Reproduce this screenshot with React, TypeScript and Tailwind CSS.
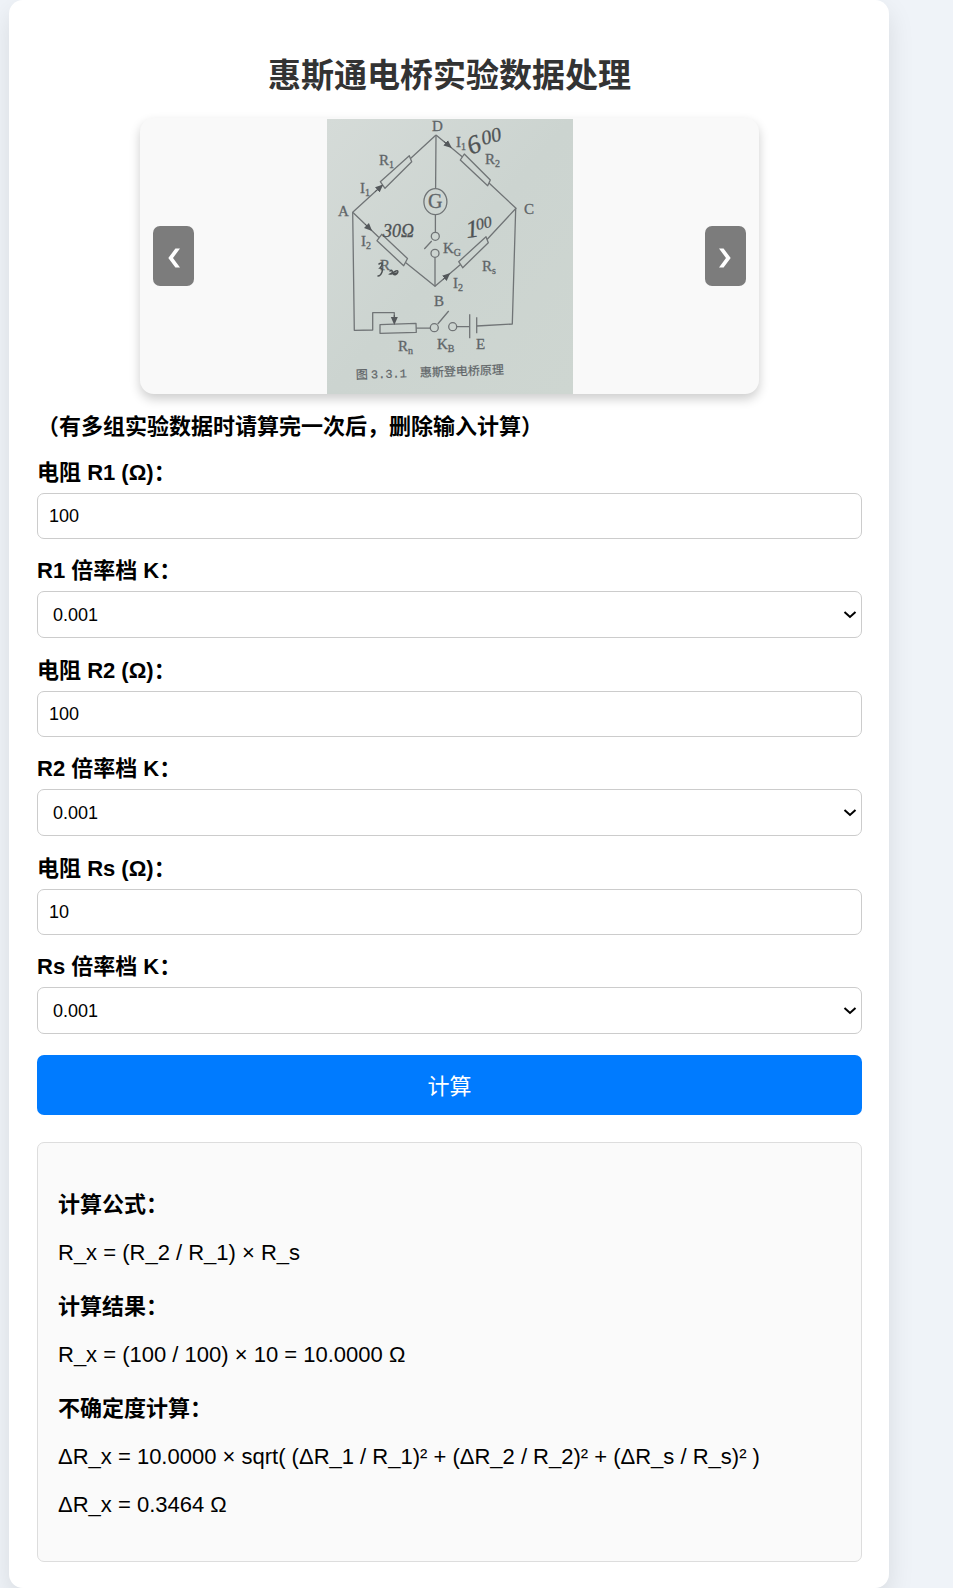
import { useState } from "react";
import type { FormEvent } from "react";

const SCALES = ["0.001", "0.01", "0.1", "1", "10", "100", "1000"];
const RELATIVE_ERROR = 0.02;

type Values = { r1: number; r2: number; rs: number };

function Label({ x, y, main, sub }: { x: number; y: number; main: string; sub?: string }) {
  return (
    <text x={x} y={y} fontSize="15">
      {main}
      {sub && (
        <tspan dy="3" fontSize="10">
          {sub}
        </tspan>
      )}
    </text>
  );
}

function BridgeDiagram() {
  return (
    <svg viewBox="0 0 246 275" className="block h-[275px] w-[246px]" role="img" aria-label="惠斯登电桥原理">
      <defs>
        <linearGradient id="paper" x1="0" y1="0" x2="1" y2="1">
          <stop offset="0" stopColor="#d5dbd8" />
          <stop offset="0.5" stopColor="#ccd4d0" />
          <stop offset="1" stopColor="#ced6d1" />
        </linearGradient>
        <marker id="arrow" viewBox="0 0 8 8" refX="5" refY="4" markerWidth="8" markerHeight="8" markerUnits="userSpaceOnUse" orient="auto">
          <path d="M0 0.5 L8 4 L0 7.5 Z" fill="#54585b" />
        </marker>
      </defs>
      <rect width="246" height="275" fill="url(#paper)" />

      <g fill="none" stroke="#707476" strokeWidth="1.3" strokeLinejoin="round">
        <path d="M109 16 L83.500 39.500 M55.500 66 L25.700 93.300 L52 118.500 M78.500 143.500 L108 167.300 L133.500 145.500 M160 120.500 L189 89.300 L162 64 M135.500 38 L109 16" />
        <path d="M82.300 36.700 L84.700 42.700 L58 69.300 L53.300 62.700 Z" />
        <path d="M137.300 35 L163.300 61 L160.700 66.700 L133.300 41 Z" />
        <path d="M54.700 115.300 L80.500 139.500 L76.700 146.700 L50 121.700 Z" />
        <path d="M159 117.700 L161.300 123.700 L135.700 148.700 L131.700 142.700 Z" />
        <path d="M109 16 L108.600 69.700 M108.400 95.700 V113.300 M104.700 122 L97.300 130 M108 138.500 V167.300" />
        <ellipse cx="108.400" cy="82.700" rx="11.500" ry="13" />
        <circle cx="108.300" cy="117.300" r="4" />
        <circle cx="108" cy="134.300" r="4" />
        <path d="M25.700 93.300 L27.300 211.300 L45.700 211 V193.700 H67.300 V198" />
        <path d="M53 205.700 L89 204.300 L89.300 213.300 L53 214.300 Z" />
        <path d="M89.300 209.200 H103.300 M110.700 205 L121.700 192 M129.700 207.700 H142.700 M142.700 195.300 V219.300 M149.700 198.300 V214.300 M149.700 207 L185.300 205 L188.700 89.300" />
        <circle cx="107.300" cy="208.700" r="4" />
        <circle cx="125.700" cy="207.700" r="4" />
      </g>

      <g fill="none" stroke="#54585b" strokeWidth="1">
        <path d="M48 72.800 L54 67.500" markerEnd="url(#arrow)" />
        <path d="M117 22.500 L122.500 27" markerEnd="url(#arrow)" />
        <path d="M38 105 L43 110" markerEnd="url(#arrow)" />
        <path d="M116 160.500 L121 156" markerEnd="url(#arrow)" />
        <path d="M67.300 196 V203" markerEnd="url(#arrow)" />
      </g>

      <g fill="#606568" stroke="#606568" strokeWidth="0.3" fontFamily="'Liberation Serif', serif">
        <Label x={105} y={12} main="D" />
        <Label x={11} y={97} main="A" />
        <Label x={197} y={95} main="C" />
        <Label x={107} y={187} main="B" />
        <Label x={149} y={230} main="E" />
        <Label x={52} y={46} main="R" sub="1" />
        <Label x={158} y={45} main="R" sub="2" />
        <Label x={53} y={151} main="R" />
        <Label x={155} y={152} main="R" sub="s" />
        <Label x={71} y={232} main="R" sub="n" />
        <Label x={33} y={74} main="I" sub="1" />
        <Label x={129} y={28} main="I" sub="1" />
        <Label x={34} y={127} main="I" sub="2" />
        <Label x={126} y={169} main="I" sub="2" />
        <Label x={116} y={134} main="K" sub="G" />
        <Label x={110} y={230} main="K" sub="B" />
        <text x="101" y="89" fontSize="20">
          G
        </text>
      </g>

      <g fill="#4f5355" stroke="#4f5355" strokeWidth="0.3" fontFamily="'Liberation Serif', serif" fontStyle="italic">
        <text x="144" y="36" fontSize="26" transform="rotate(-22 144 36)">
          6
        </text>
        <text x="156" y="26" fontSize="20" transform="rotate(-14 156 26)">
          00
        </text>
        <text x="56" y="118" fontSize="18">
          30Ω
        </text>
        <text x="140" y="119" fontSize="25" transform="rotate(-8 140 119)">
          1
        </text>
        <text x="150" y="111" fontSize="16" transform="rotate(-12 150 111)">
          00
        </text>
      </g>
      <path
        d="M52 145 C57 142 55 147 53 149 C58 149 54 157 51 157 M63 152 C66 149 66 156 63 155 L69 152 C73 150 70 158 66 155 L70 154"
        fill="none"
        stroke="#4d5153"
        strokeWidth="1.5"
        strokeLinecap="round"
      />

      <g fill="#606568" stroke="#606568" strokeWidth="0.2" fontSize="12" fontFamily="'Liberation Mono', 'Noto Sans CJK SC', monospace" transform="rotate(-2 30 260)">
        <text x="29" y="260">
          图
        </text>
        <text x="44" y="260">
          3.3.1
        </text>
        <text x="93" y="260">
          惠斯登电桥原理
        </text>
      </g>
    </svg>
  );
}

function Carousel() {
  const arrow =
    "absolute top-1/2 flex h-[60px] w-[41px] -translate-y-1/2 items-center justify-center rounded-[7px] bg-[#7c7c7c] pt-1 text-white";
  return (
    <div className="relative mx-auto flex w-3/4 justify-center overflow-hidden rounded-[14px] bg-[#f9f9f9] pt-px shadow-[0_5px_11px_rgba(0,0,0,0.2)]">
      <BridgeDiagram />
      <button type="button" aria-label="上一张" className={`${arrow} left-[13px]`}>
        <svg viewBox="0 0 12 20" className="h-5 w-3" fill="currentColor">
          <path d="M7.400 0.500 H12 L5 10 L12 19.500 H7.400 L0.300 10 Z" />
        </svg>
      </button>
      <button type="button" aria-label="下一张" className={`${arrow} right-[13px]`}>
        <svg viewBox="0 0 12 20" className="h-5 w-3" fill="currentColor">
          <path d="M4.600 0.500 H0 L7 10 L0 19.500 H4.600 L11.700 10 Z" />
        </svg>
      </button>
    </div>
  );
}

function ResistorFields({
  id,
  name,
  value,
  onChange,
}: {
  id: string;
  name: string;
  value: string;
  onChange: (value: string) => void;
}) {
  const [scale, setScale] = useState(SCALES[0]);
  return (
    <div className="flex flex-col gap-4">
      <div className="flex flex-col gap-1">
        <label htmlFor={id} className="leading-8 font-bold">
          电阻 {name} (Ω)：
        </label>
        <input
          id={id}
          type="text"
          inputMode="decimal"
          value={value}
          onChange={(e) => onChange(e.target.value)}
          className="h-[46px] w-full rounded-[7px] border border-[#ccc] bg-white px-[11px] text-lg"
        />
      </div>
      <div className="flex flex-col gap-1">
        <label htmlFor={`${id}-scale`} className="leading-8 font-bold">
          {name} 倍率档 K：
        </label>
        <div className="relative">
          <select
            id={`${id}-scale`}
            value={scale}
            onChange={(e) => setScale(e.target.value)}
            className="block h-[47px] w-full appearance-none rounded-[7px] border border-[#ccc] bg-white px-[15px] text-lg"
          >
            {SCALES.map((s) => (
              <option key={s}>{s}</option>
            ))}
          </select>
          <svg
            viewBox="0 0 14 10"
            className="pointer-events-none absolute top-1/2 right-[5px] h-[10px] w-[14px] -translate-y-1/2"
            fill="none"
            stroke="#000"
            strokeWidth="2"
          >
            <path d="M1.500 2 L7 7 L12.500 2" />
          </svg>
        </div>
      </div>
    </div>
  );
}

function Results({ r1, r2, rs }: Values) {
  const rx = (r2 / r1) * rs;
  const delta = rx * Math.sqrt(3 * RELATIVE_ERROR ** 2);
  return (
    <section className="mt-[27px] rounded-[7px] border border-[#ddd] bg-[#fafafa] px-5 pt-[46px] pb-10 leading-8">
      <h3 className="mb-4 font-bold">计算公式：</h3>
      <p className="mb-[22px]">R_x = (R_2 / R_1) × R_s</p>
      <h3 className="mb-4 font-bold">计算结果：</h3>
      <p className="mb-[22px]">
        R_x = ({r2} / {r1}) × {rs} = {rx.toFixed(4)} Ω
      </p>
      <h3 className="mb-4 font-bold">不确定度计算：</h3>
      <p className="mb-4">ΔR_x = {rx.toFixed(4)} × sqrt( (ΔR_1 / R_1)² + (ΔR_2 / R_2)² + (ΔR_s / R_s)² )</p>
      <p>ΔR_x = {delta.toFixed(4)} Ω</p>
    </section>
  );
}

export default function App() {
  const [r1, setR1] = useState("100");
  const [r2, setR2] = useState("100");
  const [rs, setRs] = useState("10");
  const [values, setValues] = useState<Values>({ r1: 100, r2: 100, rs: 10 });

  const calculate = (e: FormEvent) => {
    e.preventDefault();
    setValues({ r1: Number(r1), r2: Number(r2), rs: Number(rs) });
  };

  return (
    <div className="min-h-screen bg-[#eff3f8] pr-16 pl-[9px] font-['Liberation_Sans','Noto_Sans_CJK_SC',sans-serif] text-[22px] text-black">
      <main className="rounded-[14px] bg-white pt-[52px] pr-[27px] pb-[26px] pl-7 shadow-[0_11px_27px_rgba(0,0,0,0.1)]">
        <h1 className="mb-[18px] text-center text-[33px] leading-[48px] font-bold text-[#333]">惠斯通电桥实验数据处理</h1>
        <Carousel />
        <form onSubmit={calculate}>
          <p className="mt-[17px] mb-[14px] leading-8 font-bold">（有多组实验数据时请算完一次后，删除输入计算）</p>
          <div className="flex flex-col gap-[17px]">
            <ResistorFields id="r1" name="R1" value={r1} onChange={setR1} />
            <ResistorFields id="r2" name="R2" value={r2} onChange={setR2} />
            <ResistorFields id="rs" name="Rs" value={rs} onChange={setRs} />
          </div>
          <button type="submit" className="mt-[21px] h-[60px] w-full rounded-[7px] bg-[#007bff] pt-[2px] text-white">
            计算
          </button>
        </form>
        <Results {...values} />
      </main>
    </div>
  );
}
